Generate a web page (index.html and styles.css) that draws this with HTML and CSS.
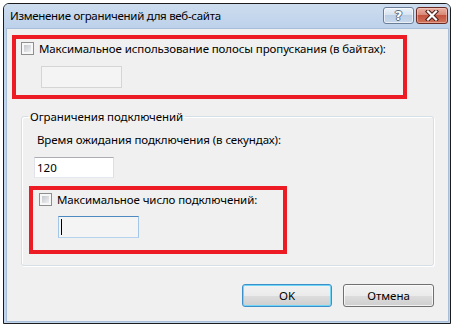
FILE: index.html
```html
<!doctype html>
<html>
<head>
  <meta charset="utf-8">
  <link rel="stylesheet" href="styles.css">
</head>
<body>
  <div class="window">
    <div class="titlebar">
      <span class="title">Изменение ограничений для веб-сайта</span>
      <div class="capbtn help"><span>?</span></div>
      <div class="capbtn close">
        <svg width="14" height="11" viewBox="0 0 14 11">
          <path d="M3 1.5 L11 9.5 M11 1.5 L3 9.5" stroke="#4b1c16" stroke-width="4.2" stroke-linecap="square"/>
          <path d="M3 1.5 L11 9.5 M11 1.5 L3 9.5" stroke="#fff" stroke-width="2.2" stroke-linecap="square"/>
        </svg>
      </div>
    </div>
    <div class="client">
      <div class="mark first">
        <label class="row"><input type="checkbox" class="check">Максимальное использование полосы пропускания (в байтах):</label>
        <input type="text" class="field off bandwidth" disabled>
      </div>

      <fieldset class="group">
        <legend>Ограничения подключений</legend>
        <div class="caption">Время ожидания подключения (в секундах):</div>
        <input type="text" class="field timeout" value="120">
        <div class="mark second">
          <label class="row"><input type="checkbox" class="check">Максимальное число подключений:</label>
          <div class="field focus connections"><span class="caret"></span></div>
        </div>
      </fieldset>

      <div class="buttons">
        <button class="btn default ok">OK</button>
        <button class="btn cancel">Отмена</button>
      </div>
    </div>
  </div>
</body>
</html>
```

FILE: styles.css
```css
body {
  margin: 0;
  padding: 3px 0 0 3px;
  background: #fff;
  font-family: "Noto Sans", "DejaVu Sans", sans-serif;
  font-size: 11.5px;
  letter-spacing: -0.1px;
  color: #000;
}

.window {
  width: 448px;
  height: 321px;
  box-sizing: border-box;
  border: 1px solid #1c1c1c;
  border-radius: 6px 6px 0 0;
  background: #c0d4eb;
  display: flex;
  flex-direction: column;
  overflow: hidden;
}

/* title bar */
.titlebar {
  height: 25px;
  flex: none;
  display: flex;
  align-items: flex-start;
  padding: 0 2px 0 6px;
  background: linear-gradient(#cddcef, #bcd1ea);
}
.title {
  flex: 1;
  line-height: 23px;
  letter-spacing: -0.3px;
  white-space: nowrap;
}
.capbtn {
  margin-top: 3px;
  height: 17px;
  box-sizing: border-box;
  border-radius: 3px;
  display: flex;
  align-items: center;
  justify-content: center;
}
.help {
  width: 31px;
  margin-right: 2px;
  border: 1px solid #6b7e98;
  background: linear-gradient(#eef3f9 0%, #d7e3f1 45%, #bccfe5 50%, #c9d9ec 100%);
  box-shadow: inset 0 0 0 1px rgba(255,255,255,0.6);
}
.help span {
  font-family: "DejaVu Sans", sans-serif;
  font-weight: bold;
  font-size: 13px;
  line-height: 13px;
  color: #fff;
  text-shadow: -1px 0 #5b6b80, 1px 0 #5b6b80, 0 -1px #5b6b80, 0 1px #5b6b80;
}
.close {
  width: 32px;
  border: 1px solid #6a2a24;
  background: linear-gradient(#eab1a3 0%, #d98a78 45%, #c4533f 50%, #d0735c 100%);
  box-shadow: inset 0 0 0 1px rgba(255,220,210,0.45);
}

/* dialog body */
.client {
  flex: 1;
  margin: 0 2px 2px 3px;
  background: #f0f0f0;
  box-shadow: 0 0 0 1px #a7bdd8;
}

.mark {
  box-sizing: border-box;
  border: 4px solid #ed1c24;
}
.first {
  width: 395px;
  height: 64px;
  margin: 6px 0 0 5px;
  padding: 2px 0 0 5px;
}
.second {
  width: 258px;
  height: 68px;
  margin: 8px 0 0 7px;
  padding: 2px 0 0 6px;
}

.row {
  display: flex;
  align-items: center;
  height: 15px;
  line-height: 15px;
  white-space: nowrap;
}
.check {
  appearance: none;
  -webkit-appearance: none;
  margin: 0 5px 0 0;
  width: 13px;
  height: 13px;
  box-sizing: border-box;
  border: 1px solid #8e8f8f;
  padding: 2px;
  background: linear-gradient(135deg, #c4c8cd, #eeeff0) content-box, #f7f7f7;
  flex: none;
}

.field {
  display: block;
  box-sizing: border-box;
  margin: 0;
  padding: 0 2px;
  font: inherit;
  color: #000;
  outline: none;
}
.off {
  border: 1px solid #d5d5d5;
  background: #f4f4f4;
}
.bandwidth {
  width: 81px;
  height: 22px;
  margin: 10px 0 0 20px;
}
.timeout {
  width: 80px;
  height: 21px;
  margin: 10px 0 0 12px;
  border: 1px solid;
  border-color: #abadb3 #dbdfe6 #e3e9ef #e2e3ea;
  background: #fff;
}
.focus {
  border: 1px solid;
  border-color: #4e8ac2 #a4c6e6 #b5d3ef #a4c6e6;
  background: #f4f4f4;
}
.connections {
  width: 81px;
  height: 22px;
  margin: 9px 0 0 19px;
  padding: 2px 0 0 2px;
}
.caret {
  display: block;
  width: 1px;
  height: 16px;
  background: #000;
}

/* group box */
.group {
  width: 413px;
  box-sizing: border-box;
  margin: 10px 0 0 14px;
  padding: 8px 0 11px 0;
  border: 1px solid #d5dfe5;
  border-radius: 3px;
  box-shadow: inset 1px 1px 0 #fff, 1px 1px 0 #fff;
}
.group legend {
  margin-left: 6px;
  padding: 0 2px;
  line-height: 15px;
}
.caption {
  margin-left: 15px;
  line-height: 15px;
}

/* buttons */
.buttons {
  display: flex;
  justify-content: flex-end;
  gap: 11px;
  margin-top: 18px;
  padding-right: 14px;
}
.btn {
  height: 23px;
  margin: 0;
  padding: 0;
  font: inherit;
  color: #000;
  border: 1px solid #707070;
  border-radius: 3px;
  background: linear-gradient(#f2f2f2 0%, #ebebeb 50%, #dddddd 50%, #cfcfcf 100%);
  box-shadow: inset 0 0 0 1px rgba(255,255,255,0.7);
}
.ok {
  width: 90px;
}
.cancel {
  width: 91px;
}
.default {
  border-color: #3c8fc8;
  box-shadow: inset 0 0 0 1px #6fd6f8;
}
```
